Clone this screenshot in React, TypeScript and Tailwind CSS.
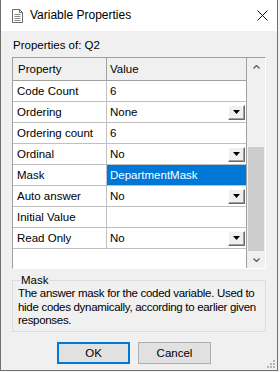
import { ReactNode } from "react";

type Row = {
  name: string;
  value: string;
  dropdown?: boolean;
  selected?: boolean;
};

const ROWS: Row[] = [
  { name: "Code Count", value: "6" },
  { name: "Ordering", value: "None", dropdown: true },
  { name: "Ordering count", value: "6" },
  { name: "Ordinal", value: "No", dropdown: true },
  { name: "Mask", value: "DepartmentMask", selected: true },
  { name: "Auto answer", value: "No", dropdown: true },
  { name: "Initial Value", value: "" },
  { name: "Read Only", value: "No", dropdown: true },
];

function DropButton() {
  return (
    <div className="ml-auto mr-[1px] flex h-[15px] w-[17px] items-center justify-center border border-t-white border-l-white border-r-[#696969] border-b-[#696969] bg-[#f0f0f0] shadow-[inset_-1px_-1px_0_#a0a0a0]">
      <svg width="7" height="4" viewBox="0 0 7 4">
        <path d="M0 0h7L3.5 4z" fill="#000" />
      </svg>
    </div>
  );
}

function GridRow({ row }: { row: Row }) {
  return (
    <div className="flex h-[21px] border-b border-[#c0c0c0] bg-white">
      <div className="flex w-[94px] items-center border-r border-[#c0c0c0] pl-[4px]">{row.name}</div>
      <div
        className={
          row.selected
            ? "flex flex-1 items-center bg-[#0078d7] pl-[3px] text-white"
            : "flex flex-1 items-center pl-[3px]"
        }
      >
        <span>{row.value}</span>
        {row.dropdown && <DropButton />}
      </div>
    </div>
  );
}

function Button({ children, focused }: { children: ReactNode; focused?: boolean }) {
  return (
    <div
      className={
        focused
          ? "flex h-[22px] w-[73px] items-center justify-center border-2 border-[#0078d7] bg-[#e1e1e1]"
          : "flex h-[22px] w-[73px] items-center justify-center border border-[#adadad] bg-[#e1e1e1]"
      }
    >
      {children}
    </div>
  );
}

export default function App() {
  return (
    <div className="h-[372px] w-[280px] bg-[#f3f3f3] text-[11.5px] leading-[15px] text-black [font-family:'Liberation_Sans',Arial,sans-serif]">
      <div className="relative flex h-[371px] w-[278px] flex-col border-x border-b border-[#707070] bg-[#f0f0f0]">
        {/* Title bar */}
        <div className="flex h-[31px] items-center bg-white pl-[11px] pr-[8px]">
          <svg width="11" height="14" viewBox="0 0 11 14" className="mr-[7px]">
            <path d="M0.5 0.5h7l3 3v10h-10z" fill="#fff" stroke="#6b6b6b" />
            <path d="M7.5 0.5v3h3" fill="none" stroke="#6b6b6b" />
            <path d="M2.5 5.5h6M2.5 7.5h6M2.5 9.5h6M2.5 11.5h6" stroke="#8a8a8a" />
          </svg>
          <span className="text-[12px]">Variable Properties</span>
          <svg width="11" height="11" viewBox="0 0 11 11" className="ml-auto mr-[1px]">
            <path d="M0.5 0.5l10 10M10.5 0.5l-10 10" stroke="#111" strokeWidth="1" />
          </svg>
        </div>

        {/* Body */}
        <div className="flex flex-1 flex-col px-[11px] pt-[7px]">
          <div className="h-[15px] pl-[1px]">Properties of: Q2</div>

          <div className="mt-[4px] flex h-[212px] border border-t-[#a0a0a0] border-l-[#a0a0a0] border-r-white border-b-white bg-white">
            <div className="flex flex-1 flex-col border-r border-[#a0a0a0]">
              <div className="flex h-[23px] border-b border-[#a0a0a0] bg-[#f0f0f0]">
                <div className="flex w-[94px] items-center border-r border-[#a0a0a0] pl-[5px]">Property</div>
                <div className="flex flex-1 items-center pl-[3px]">Value</div>
              </div>
              {ROWS.map((r) => (
                <GridRow key={r.name} row={r} />
              ))}
            </div>

            {/* Scrollbar */}
            <div className="flex w-[18px] flex-col bg-[#f0f0f0]">
              <div className="flex h-[17px] items-center justify-center">
                <svg width="7" height="4" viewBox="0 0 7 4">
                  <path d="M0.5 3.5l3-3 3 3" fill="none" stroke="#606060" strokeWidth="1.4" />
                </svg>
              </div>
              <div className="flex-1" />
              <div className="mx-[1px] h-[104px] bg-[#cdcdcd]" />
              <div className="flex h-[17px] items-center justify-center">
                <svg width="7" height="4" viewBox="0 0 7 4">
                  <path d="M0.5 0.5l3 3 3-3" fill="none" stroke="#606060" strokeWidth="1.4" />
                </svg>
              </div>
            </div>
          </div>

          {/* Description group */}
          <div className="relative mt-[11px] h-[52px] border border-[#dcdcdc] pl-[5px] pt-[6px] leading-[13.5px]">
            <span className="absolute left-[7px] top-[-8px] bg-[#f0f0f0] px-[1px] leading-[15px]">Mask</span>
            <div className="whitespace-nowrap tracking-[-0.3px]">
              The answer mask for the coded variable. Used to
              <br />
              hide codes dynamically, according to earlier given
              <br />
              responses.
            </div>
          </div>

          <div className="mt-[10px] flex justify-center gap-[8px] pr-[10px]">
            <Button focused>OK</Button>
            <Button>Cancel</Button>
          </div>
        </div>

        {/* Resize grip */}
        <div className="absolute bottom-[2px] right-[2px] grid grid-cols-3 gap-[1px]">
          <span className="h-[2px] w-[2px]" />
          <span className="h-[2px] w-[2px]" />
          <span className="h-[2px] w-[2px] bg-[#b4b4b4]" />
          <span className="h-[2px] w-[2px]" />
          <span className="h-[2px] w-[2px] bg-[#b4b4b4]" />
          <span className="h-[2px] w-[2px] bg-[#b4b4b4]" />
          <span className="h-[2px] w-[2px] bg-[#b4b4b4]" />
          <span className="h-[2px] w-[2px] bg-[#b4b4b4]" />
          <span className="h-[2px] w-[2px] bg-[#b4b4b4]" />
        </div>
      </div>
    </div>
  );
}
